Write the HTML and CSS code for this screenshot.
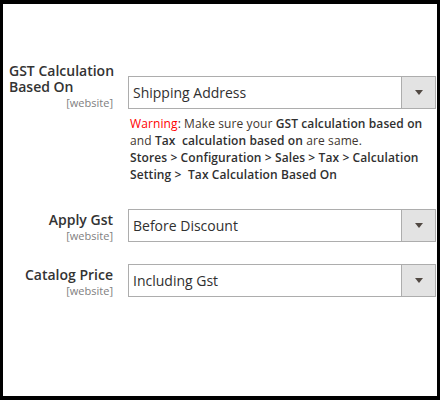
FILE: index.html
```html
<!DOCTYPE html>
<html lang="en">
<head>
    <meta charset="UTF-8">
    <meta name="viewport" content="width=device-width, initial-scale=1.0">
    <title>Tax Settings</title>
    <link rel="stylesheet" href="styles.css">
</head>
<body>
    <div class="frame">
        <!-- GST calculation -->
        <div class="field">
            <div class="field-label">
                <span class="label-text">GST Calculation<br>Based On</span>
                <span class="scope">[website]</span>
            </div>
            <div class="select">
                <span class="select-value">Shipping Address</span>
                <span class="select-arrow"></span>
            </div>
        </div>
        <div class="note">
            <span class="warn">Warning</span>: Make sure your <b>GST calculation based on</b><br>
            and <b>Tax&nbsp; calculation based on</b> are same.<br>
            <b>Stores &gt; Configuration &gt; Sales &gt; Tax &gt; Calculation<br>
            Setting &gt;&nbsp; Tax Calculation Based On</b>
        </div>

        <!-- Apply Gst -->
        <div class="field field-apply">
            <div class="field-label">
                <span class="label-text">Apply Gst</span>
                <span class="scope">[website]</span>
            </div>
            <div class="select">
                <span class="select-value">Before Discount</span>
                <span class="select-arrow"></span>
            </div>
        </div>

        <!-- Catalog price -->
        <div class="field field-catalog">
            <div class="field-label">
                <span class="label-text">Catalog Price</span>
                <span class="scope">[website]</span>
            </div>
            <div class="select">
                <span class="select-value">Including Gst</span>
                <span class="select-arrow"></span>
            </div>
        </div>
    </div>
</body>
</html>
```

FILE: styles.css
```css
/* Base */
body, html {
    margin: 0;
    padding: 0;
    height: 100%;
    background-color: #000;
    font-family: "Open Sans", "Liberation Sans", sans-serif;
    color: #303030;
}

.frame {
    margin: 4px 3px 0 3px;
    height: 392px;
    background-color: #fff;
    padding: 59px 1px 0 6px;
    box-sizing: border-box;
}

/* Field rows */
.field {
    display: flex;
    align-items: flex-end;
    gap: 15px;
}

.field-apply {
    margin-top: 26px;
}

.field-catalog {
    margin-top: 22px;
}

.field-label {
    width: 104px;
    flex-shrink: 0;
    text-align: right;
    white-space: nowrap;
    line-height: 16px;
}

.label-text {
    display: inline-block;
    vertical-align: top;
    text-align: left;
    font-size: 14px;
    font-weight: 600;
    line-height: 16px;
    color: #333;
}

.scope {
    display: block;
    font-size: 11px;
    line-height: 13px;
    color: #808080;
    margin-top: 1px;
}

/* Select box */
.select {
    flex: 1;
    display: flex;
    height: 33px;
    border: 1px solid #adadad;
    box-sizing: border-box;
    background-color: #fff;
}

.select-value {
    flex: 1;
    padding-left: 4px;
    font-size: 14px;
    line-height: 31px;
    color: #303030;
}

.select-arrow {
    width: 33px;
    border-left: 1px solid #adadad;
    background-color: #e3e3e3;
    display: flex;
    align-items: center;
    justify-content: center;
}

.select-arrow::after {
    content: "";
    border-left: 4px solid transparent;
    border-right: 4px solid transparent;
    border-top: 5px solid #514943;
}

/* Warning note */
.note {
    margin: 6px 0 0 121px;
    font-size: 12px;
    line-height: 17px;
    letter-spacing: 0.1px;
    color: #41362f;
    white-space: nowrap;
}

.note b {
    font-weight: 600;
    color: #303030;
}

.warn {
    color: #f00;
}
```
